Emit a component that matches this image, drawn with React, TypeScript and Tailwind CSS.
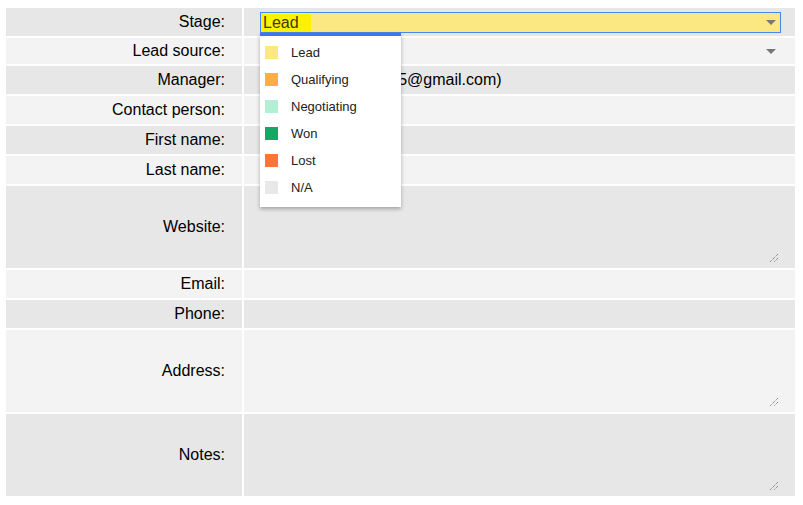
import React from "react";

const Grip = () => (
  <svg width="10" height="10" viewBox="0 0 10 10">
    <line x1="9" y1="1" x2="1" y2="9" stroke="#666" strokeWidth="1" strokeDasharray="1 1" />
    <line x1="9" y1="5" x2="5" y2="9" stroke="#666" strokeWidth="1" strokeDasharray="1 1" />
  </svg>
);

const Arrow = () => (
  <svg width="10" height="5" viewBox="0 0 10 5">
    <polygon points="0,0 10,0 5,5" fill="#777" />
  </svg>
);

const items = [
  { label: "Lead", color: "bg-[#fce883]" },
  { label: "Qualifying", color: "bg-[#ffad47]" },
  { label: "Negotiating", color: "bg-[#b3efd3]" },
  { label: "Won", color: "bg-[#16a765]" },
  { label: "Lost", color: "bg-[#ff7537]" },
  { label: "N/A", color: "bg-[#e8e8e8]" },
];

type Row = { label: string; h: string; dark: boolean; kind?: string };

const rows: Row[] = [
  { label: "Stage:", h: "h-[28px]", dark: true, kind: "stage" },
  { label: "Lead source:", h: "h-[26px]", dark: false, kind: "select" },
  { label: "Manager:", h: "h-[28px]", dark: true, kind: "manager" },
  { label: "Contact person:", h: "h-[28px]", dark: false },
  { label: "First name:", h: "h-[28px]", dark: true },
  { label: "Last name:", h: "h-[28px]", dark: false },
  { label: "Website:", h: "h-[82px]", dark: true, kind: "area" },
  { label: "Email:", h: "h-[28px]", dark: false },
  { label: "Phone:", h: "h-[28px]", dark: true },
  { label: "Address:", h: "h-[82px]", dark: false, kind: "area" },
  { label: "Notes:", h: "h-[82px]", dark: true, kind: "area" },
];

export default function App() {
  return (
    <div className="w-[803px] h-[505px] bg-white pt-[8px] pl-[6px] font-['Liberation_Sans',Arial,sans-serif] text-[16px] text-black">
      <div className="grid grid-cols-[236px_551px] gap-[2px]">
        {rows.map((r, i) => {
          const bg = r.dark ? "bg-[#e7e7e7]" : "bg-[#f3f3f3]";
          return (
            <React.Fragment key={i}>
              <div className={`${r.h} ${bg} flex items-center justify-end pr-[17px]`}>{r.label}</div>
              {r.kind === "stage" && (
                <div className={`${r.h} ${bg} relative pl-[16px] pr-[14px] pt-[4px]`}>
                  <div className="h-[21px] bg-[#fbe883] border border-[#4a86f0] flex items-center justify-between pr-[4px]">
                    <span className="bg-[#fff200] h-[18px] w-[50px] pl-[2px] leading-[18px] text-[#3a3a00]">Lead</span>
                    <Arrow />
                  </div>
                  <div className="absolute left-[16px] top-[25px] w-[141px] bg-white z-10 shadow-[0_2px_4px_rgba(0,0,0,0.3)] pt-[3px] pb-[6px] border-t-[3px] border-[#3b78e7] text-[13px] text-[#222] flex flex-col">
                    {items.map((it) => (
                      <div key={it.label} className="h-[27px] flex items-center gap-[13px] pl-[5px]">
                        <div className={`w-[13px] h-[13px] ${it.color}`} />
                        <span>{it.label}</span>
                      </div>
                    ))}
                  </div>
                </div>
              )}
              {r.kind === "select" && (
                <div className={`${r.h} ${bg} flex items-center justify-end pr-[19px]`}>
                  <Arrow />
                </div>
              )}
              {r.kind === "manager" && (
                <div className={`${r.h} ${bg} flex items-center pl-[19px] whitespace-nowrap`}>John Doe (johndoe5@gmail.com)</div>
              )}
              {r.kind === "area" && (
                <div className={`${r.h} ${bg} flex items-end justify-end pr-[16px] pb-[5px]`}>
                  <Grip />
                </div>
              )}
              {!r.kind && <div className={`${r.h} ${bg}`} />}
            </React.Fragment>
          );
        })}
      </div>
    </div>
  );
}
